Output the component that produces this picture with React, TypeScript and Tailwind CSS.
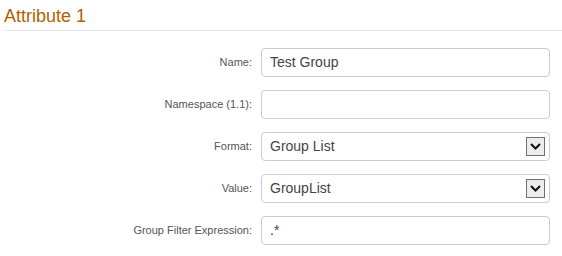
const ROWS = [
  { label: 'Name:', value: 'Test Group', kind: 'input' },
  { label: 'Namespace (1.1):', value: '', kind: 'input' },
  { label: 'Format:', value: 'Group List', kind: 'select' },
  { label: 'Value:', value: 'GroupList', kind: 'select' },
  { label: 'Group Filter Expression:', value: '.*', kind: 'input' },
];

function Chevron() {
  return (
    <svg width="11" height="7" viewBox="0 0 11 7" fill="none" stroke="#111" strokeWidth="2">
      <polyline points="1,1 5.5,5.5 10,1" />
    </svg>
  );
}

export default function App() {
  return (
    <div className="w-[562px] h-[256px] bg-white font-['Liberation_Sans',Arial,sans-serif]">
      <div className="ml-[4px] pt-[5px] h-[31px] border-b border-[#e8e8e8]">
        <h2 className="text-[18px] leading-[22px] text-[#b35f00]">Attribute 1</h2>
      </div>

      <div className="mt-[17px] flex flex-col gap-[13px]">
        {ROWS.map(({ label, value, kind }) => (
          <div key={label} className="flex items-center">
            <div className="w-[253px] pr-[1px] text-right text-[11px] text-[#555]">{label}</div>
            <div className="ml-[8px] w-[289px] h-[29px] rounded-[4px] border border-[#cccccc] bg-white flex items-center pl-[8px] pr-[4px]">
              <span className="flex-1 text-[14px] text-[#444]">{value}</span>
              {kind === 'select' && (
                <span className="w-[19px] h-[19px] border border-[#707070] bg-[#ececec] flex items-center justify-center">
                  <Chevron />
                </span>
              )}
            </div>
          </div>
        ))}
      </div>
    </div>
  );
}
